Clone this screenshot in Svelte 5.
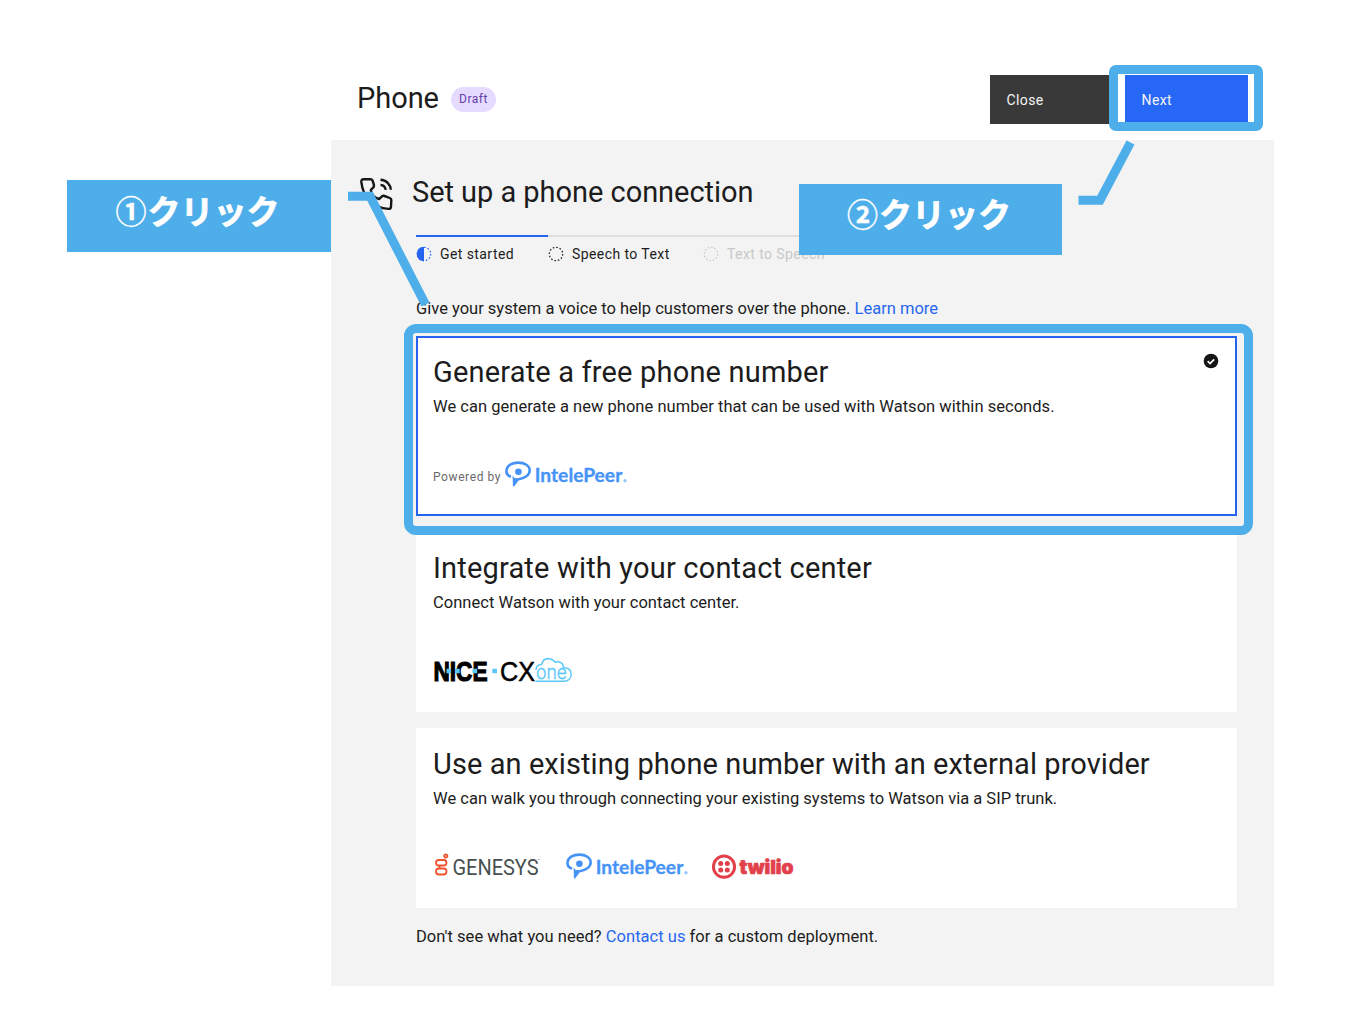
<script lang="ts">
    const steps = [
        { label: "Get started", state: "current" },
        { label: "Speech to Text", state: "todo" },
        { label: "Text to Speech", state: "disabled" },
    ];

    const cards = [
        {
            id: "generate",
            title: "Generate a free phone number",
            text: "We can generate a new phone number that can be used with Watson within seconds.",
        },
        {
            id: "contact",
            title: "Integrate with your contact center",
            text: "Connect Watson with your contact center.",
        },
        {
            id: "external",
            title: "Use an existing phone number with an external provider",
            text: "We can walk you through connecting your existing systems to Watson via a SIP trunk.",
        },
    ];

    let selected = "generate";
</script>

{#snippet intelepeer()}
    <svg class="logo" width="124" height="28" viewBox="0 0 124 28">
        <path
            d="M7 16.800C3.300 15.400 2 12.600 2.600 9.800 3.500 5.200 8.600 2.600 14.300 2.600c6.400 0 11.400 3.200 11.400 7.700 0 4.900-5.200 8-11 9"
            fill="none"
            stroke="#4693f8"
            stroke-width="2.600"
        />
        <path d="M8.600 15.600l2 2.400 5.700.2-6.200 8.200-1.200-.2z" fill="#4693f8" />
        <circle cx="14.400" cy="11.800" r="3.300" fill="#4693f8" />
        <text x="30.800" y="22.400" textLength="87.500" lengthAdjust="spacingAndGlyphs" class="ip">IntelePeer</text>
        <circle cx="121" cy="20.800" r="1.300" fill="#a6cbfb" stroke="#7db3fa" stroke-width=".6" />
    </svg>
{/snippet}

<div class="page">
    <div class="app">
        <header>
            <h1>Phone</h1>
            <span class="tag">Draft</span>
            <button class="close">Close</button>
            <button class="next">Next</button>
        </header>

        <main>
            <div class="title">
                <svg width="35" height="35" viewBox="1 .5 35 35" fill="none" stroke="#161616" stroke-width="2.400">
                    <path
                        d="M4.500 2.700h7.200c1.200 0 1.700.7 2 1.700l1.200 4c.3 1.200 0 2-.8 2.800l-2.300 2.300c.6 4.200 3.400 7.800 8.300 9l2.600-2.400c.8-.8 1.700-1 2.800-.6l5.300 2c1.100.4 1.600 1.100 1.500 2.200l-.3 6.500c-.1 1.500-1 2.300-2.500 2.200C12.500 31.300 4 19.500 2.300 5.400 2.200 3.900 3 2.700 4.500 2.700z"
                        stroke-linejoin="round"
                    />
                    <path d="M21.500 3.300c5.800.2 10 4.400 10.300 10M21.500 8.400c2.900.3 4.900 2.100 5.200 5" />
                </svg>
                <h2>Set up a phone connection</h2>
            </div>

            <ol class="steps">
                {#each steps as step}
                    <li class={step.state}>
                        <svg width="16" height="16" viewBox="0 0 16 16">
                            <circle cx="8" cy="8" r="6.700" fill="none" stroke="currentColor" stroke-width="1.200" stroke-dasharray="1.600 1.908" />
                            {#if step.state === "current"}
                                <path d="M8 .7a7.300 7.300 0 0 0 0 14.600z" fill="currentColor" />
                            {/if}
                        </svg>
                        <span>{step.label}</span>
                    </li>
                {/each}
            </ol>

            <p class="intro">Give your system a voice to help customers over the phone. <a href="#learn">Learn more</a></p>

            <div class="cards">
                {#each cards as card}
                    <section class="card {card.id}" class:selected={selected === card.id}>
                        <h3>{card.title}</h3>
                        <p>{card.text}</p>
                        <div class="logos">
                            {#if card.id === "generate"}
                                <span class="powered">Powered by</span>
                                {@render intelepeer()}
                            {:else if card.id === "contact"}
                                <svg class="logo" width="142" height="28" viewBox="0 0 142 28">
                                    <text x="0.500" y="25.300" textLength="54" lengthAdjust="spacingAndGlyphs" class="nice">NICE</text>
                                    <path d="M13.500 12.800h4.500v4.500h-4.500zM22 12.800h4.700v4.500h-4.700zM39.500 12.800h4.700v4.500h-4.700zM59.300 12.800h4.700v4.500h-4.700z" fill="#5cc8fa" />
                                    <text x="67" y="25.300" textLength="35" lengthAdjust="spacingAndGlyphs" class="cx">CX</text>
                                    <path
                                        d="M103 12.500c0-3.500 2.200-5.600 5.500-5.500 1.200-4.500 4.500-6.200 7.800-5.800 2.600.2 4.500 1.500 5.700 3.500 4.300-1.500 8.500 1 8.500 5.600 5 0 7.700 2.700 7.700 6.500 0 4.400-3.200 6.900-7.200 6.900h-28.500"
                                        transform="translate(0 1.500)"
                                        fill="none"
                                        stroke="#5cc8fa"
                                        stroke-width="1.500"
                                    />
                                    <text x="103" y="22.500" textLength="31" lengthAdjust="spacingAndGlyphs" class="one">one</text>
                                </svg>
                            {:else}
                                <svg class="logo" width="110" height="28" viewBox="0 0 110 28">
                                    <g fill="none" stroke="#f0522d" stroke-width="1.800">
                                        <rect x="3" y="8" width="10.500" height="5.500" rx="2.750" />
                                        <rect x="3" y="16.500" width="10.500" height="6" rx="3" />
                                        <path d="M6.500 13.500v3" />
                                        <circle cx="12.800" cy="4" r="1.600" />
                                    </g>
                                    <text x="19.500" y="23.200" textLength="86" lengthAdjust="spacingAndGlyphs" class="genesys">GENESYS</text>
                                    <text x="104.500" y="10" class="tm">™</text>
                                </svg>
                                {@render intelepeer()}
                                <svg class="logo" width="84" height="28" viewBox="0 0 84 28">
                                    <circle cx="13" cy="14.700" r="10.600" fill="none" stroke="#e2414c" stroke-width="3" />
                                    <g fill="#e2414c">
                                        <circle cx="9.700" cy="11.400" r="2.500" />
                                        <circle cx="16.300" cy="11.400" r="2.500" />
                                        <circle cx="9.700" cy="18" r="2.500" />
                                        <circle cx="16.300" cy="18" r="2.500" />
                                    </g>
                                    <text x="28.500" y="21.700" textLength="54" lengthAdjust="spacingAndGlyphs" class="twilio">twilio</text>
                                </svg>
                            {/if}
                        </div>
                        {#if selected === card.id}
                            <svg class="check" width="16" height="16" viewBox="0 0 16 16">
                                <circle cx="8" cy="8" r="7.300" fill="#161616" />
                                <path d="M4.700 8.200l2.300 2.300 4.200-4.200" fill="none" stroke="#fff" stroke-width="1.700" />
                            </svg>
                        {/if}
                    </section>
                {/each}
            </div>

            <p class="footer">Don't see what you need? <a href="#contact">Contact us</a> for a custom deployment.</p>
        </main>
    </div>

    <!-- tutorial annotations on top of the screen -->
    <div class="frame frame-card"></div>
    <div class="frame frame-next"></div>
    <div class="callout first"><span>①</span>クリック</div>
    <div class="callout second"><span>②</span>クリック</div>
    <svg class="arrows" width="1348" height="1026" fill="none" stroke="#4daeea" stroke-width="9">
        <polyline points="348,196.300 370,196.300 425.500,304.500" />
        <polyline points="1078.500,200.200 1100,200.200 1130.500,142.500" />
    </svg>
</div>

<style>
    :global(body) {
        background: #fff;
    }

    .page {
        position: relative;
        box-sizing: border-box;
        width: 1348px;
        height: 1026px;
        padding: 0 74px 40px 331px;
        overflow: hidden;
        background: #fff;
        color: #1c1c1c;
        font-family: Roboto, "Noto Sans", sans-serif;
    }

    .app {
        display: flex;
        flex-direction: column;
        height: 986px;
    }

    h1,
    h2,
    h3,
    p {
        margin: 0;
        font-weight: 400;
    }

    a {
        color: #2867f0;
        text-decoration: none;
    }

    header {
        display: flex;
        box-sizing: border-box;
        height: 140px;
        padding: 75px 26px 0;
    }

    h1 {
        width: 94px;
        font-size: 29px;
        line-height: 46px;
        letter-spacing: -0.05px;
    }

    .tag {
        box-sizing: border-box;
        width: 45px;
        height: 25px;
        margin-top: 12px;
        border-radius: 13px;
        background: #e5daff;
        color: #6540aa;
        font-size: 12px;
        line-height: 25px;
        letter-spacing: 0.55px;
        text-align: center;
    }

    button {
        height: 49px;
        padding: 0 16.500px;
        border: 0;
        color: #f4f4f4;
        font-family: inherit;
        font-size: 14px;
        letter-spacing: 0.4px;
        text-align: left;
    }

    .close {
        width: 122px;
        margin-left: auto;
        background: #393939;
    }

    .next {
        width: 123px;
        margin-left: 13px;
        background: #2767f5;
    }

    main {
        flex: 1;
        padding: 29px 37px 0 29px;
        background: #f3f3f3;
    }

    .title {
        display: flex;
        align-items: center;
        gap: 17px;
        height: 48px;
    }

    .title svg {
        margin-top: 2px;
        overflow: visible;
    }

    h2 {
        margin-top: -2px;
        font-size: 29px;
        letter-spacing: -0.04px;
    }

    .steps {
        display: flex;
        margin: 18px 0 0 56px;
        padding: 0;
        list-style: none;
    }

    .steps li {
        display: flex;
        align-items: center;
        gap: 8px;
        box-sizing: border-box;
        width: 155px;
        height: 29px;
        padding-top: 6px;
        border-top: 2px solid #dedede;
        font-size: 14px;
        letter-spacing: 0.42px;
        white-space: nowrap;
    }

    .steps li.current {
        width: 132px;
        border-color: #2464ef;
    }

    .steps .current svg {
        color: #2464ef;
    }

    .steps .disabled {
        color: #c8c8c8;
    }

    .intro {
        margin: 34px 0 0 56px;
        font-size: 16.500px;
        line-height: 22px;
    }

    .cards {
        display: flex;
        flex-direction: column;
        gap: 16px;
        margin: 16px 0 0 56px;
    }

    .card {
        position: relative;
        box-sizing: border-box;
        height: 180px;
        padding: 16px 17px 0;
        background: #fff;
    }

    .card.selected {
        padding: 14px 15px 0;
        border: 2px solid #2464ef;
    }

    h3 {
        font-size: 29px;
        line-height: 40px;
        letter-spacing: 0.18px;
        white-space: nowrap;
    }

    .external h3 {
        letter-spacing: 0.08px;
    }

    .card p {
        margin-top: 4px;
        font-size: 16.500px;
        line-height: 22px;
        letter-spacing: 0.03px;
        white-space: nowrap;
    }

    .card.external p {
        letter-spacing: 0.01px;
    }

    .logos {
        display: flex;
        align-items: center;
        height: 28px;
        margin-top: 42px;
    }

    .logo {
        overflow: visible;
    }

    .external .logos {
        gap: 22px;
    }

    .powered {
        width: 71px;
        padding-top: 6px;
        color: #6a6a6a;
        font-size: 12px;
        letter-spacing: 0.6px;
        white-space: nowrap;
    }

    .check {
        position: absolute;
        top: 15px;
        right: 16px;
    }

    .ip {
        fill: #4693f8;
        stroke: #4693f8;
        stroke-width: 0.3px;
        font: 700 19.500px Lato, sans-serif;
    }

    .nice {
        fill: #000;
        stroke: #000;
        stroke-width: 1.200px;
        font: 700 27.500px "Liberation Sans", sans-serif;
    }

    .cx {
        fill: #000;
        stroke: #000;
        stroke-width: 0.500px;
        font: 400 28.500px "Liberation Sans", sans-serif;
    }

    .one {
        fill: #5cc8fa;
        stroke: #5cc8fa;
        stroke-width: 0.300px;
        font: 300 20px Inter, sans-serif;
    }

    .genesys {
        fill: #474f50;
        font: 400 22.500px Roboto, sans-serif;
    }

    .tm {
        fill: #474f50;
        font: 400 4px Roboto, sans-serif;
    }

    .twilio {
        fill: #e2414c;
        stroke: #e2414c;
        stroke-width: 0.700px;
        font: 900 19px Inter, sans-serif;
    }

    .footer {
        margin: 18px 0 0 56px;
        font-size: 16.500px;
        line-height: 22px;
        letter-spacing: 0.03px;
    }

    .frame {
        position: absolute;
        box-sizing: border-box;
        border: 9px solid #4daeea;
    }

    .frame-card {
        left: 404px;
        top: 324px;
        width: 849px;
        height: 211px;
        border-radius: 12px;
    }

    .frame-next {
        left: 1109px;
        top: 65px;
        width: 154px;
        height: 66px;
        border-radius: 7px;
    }

    .callout {
        position: absolute;
        box-sizing: border-box;
        background: #4daeea;
        color: #fff;
        font: 700 33px/60px "Noto Sans CJK JP", sans-serif;
        -webkit-text-stroke: 0.8px #fff;
        text-align: center;
        white-space: nowrap;
    }

    .callout span {
        display: inline-block;
        width: 32px;
        font-size: 31px;
        line-height: 1;
        text-align: left;
        vertical-align: 1px;
        -webkit-text-stroke: 0.3px #fff;
    }

    .first {
        left: 67px;
        top: 180px;
        width: 264px;
        height: 72px;
        padding-right: 3px;
    }

    .second {
        left: 799px;
        top: 184px;
        width: 263px;
        height: 71px;
        padding-right: 3px;
        line-height: 58px;
    }

    .arrows {
        position: absolute;
        left: 0;
        top: 0;
        pointer-events: none;
    }
</style>
